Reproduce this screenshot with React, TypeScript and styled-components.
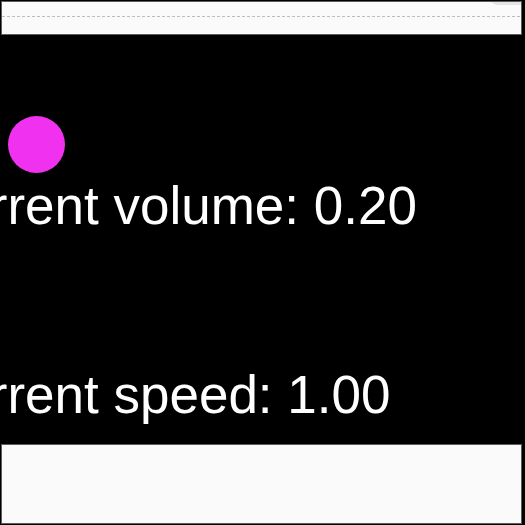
import React from "react";
import styled, { createGlobalStyle } from "styled-components";

const GlobalStyle = createGlobalStyle`
  html, body {
    margin: 0;
    padding: 0;
    background: #000;
    overflow: hidden;
  }
  #root {
    width: 525px;
    height: 525px;
    overflow: hidden;
  }
`;

const Page = styled.div`
  display: flex;
  flex-direction: column;
  width: 525px;
  height: 525px;
  padding-top: 1px;
  box-sizing: border-box;
`;

const Panel = styled.div<{ $h: number }>`
  position: relative;
  box-sizing: border-box;
  width: 521px;
  height: ${(p) => p.$h}px;
  margin-left: 1px;
  background: #fafafa;
  border: 1px solid #5c5c5c;
  flex-shrink: 0;
`;

const DashedRule = styled.div`
  margin-top: 14px;
  height: 1px;
  background: repeating-linear-gradient(
    to right,
    #bdbdbd 0px,
    #bdbdbd 3px,
    transparent 3px,
    transparent 5px
  );
`;

const CornerTab = styled.div`
  position: absolute;
  top: 0;
  right: 0;
  width: 30px;
  height: 3px;
  background: #e4e4e4;
  clip-path: polygon(0 0, 100% 0, 100% 100%, 5px 100%);
`;

const Stage = styled.div`
  height: 409px;
  flex-shrink: 0;
  display: flex;
  flex-direction: column;
  padding-top: 81px;
  box-sizing: border-box;
  overflow: hidden;
`;

const Dot = styled.div`
  width: 57px;
  height: 57px;
  border-radius: 50%;
  background: #f032f0;
  margin-left: 8px;
`;

const Readout = styled.div<{ $gap: number }>`
  margin-top: ${(p) => p.$gap}px;
  margin-left: -78px;
  font-family: "Liberation Sans", Arial, sans-serif;
  font-size: 53px;
  line-height: 60px;
  color: #fff;
  white-space: nowrap;
`;

export default function App() {
  return (
    <>
      <GlobalStyle />
      <Page>
        <Panel $h={34}>
          <CornerTab />
          <DashedRule />
        </Panel>
        <Stage>
          <Dot />
          <Readout $gap={3}>Current volume: 0.20</Readout>
          <Readout $gap={129}>Current speed: 1.00</Readout>
        </Stage>
        <Panel $h={80} />
      </Page>
    </>
  );
}
